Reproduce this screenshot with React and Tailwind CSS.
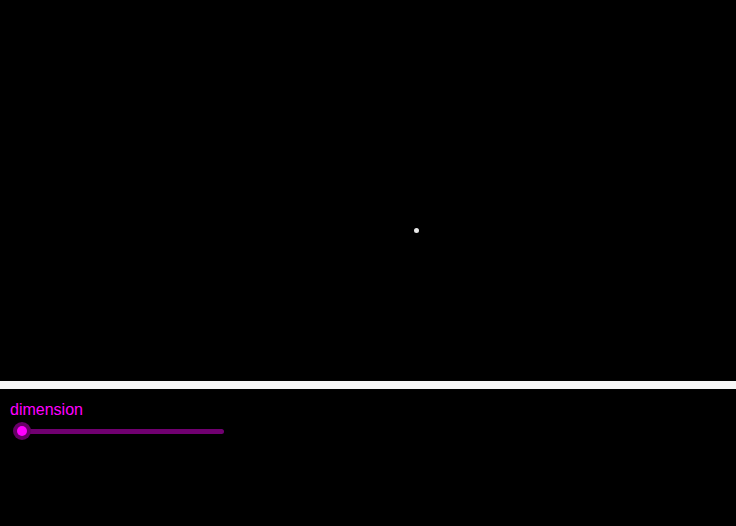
import React from "react";

const App = () => {
  return (
    <div
      className="w-[736px] h-[526px] bg-black flex flex-col overflow-hidden"
      style={{ fontFamily: '"Liberation Sans", Arial, sans-serif' }}
    >
      <div className="h-[381px] relative shrink-0">
        <div className="absolute left-[414px] top-[228px] w-[5px] h-[5px] rounded-full bg-[#e8e8e8]" />
      </div>
      <div className="h-[8px] bg-[#f7f7f7] shrink-0" />
      <div className="flex flex-col px-[10px] pt-[12px]">
        <span className="text-[16px] leading-[18px] text-[#ff00ff]">dimension</span>
        <div className="relative w-[214px] h-[18px] mt-[3px]">
          <div className="absolute left-[5px] right-0 top-[7px] h-[5px] rounded-full bg-[#700070]" />
          <div className="absolute left-[3px] top-0 w-[18px] h-[18px] rounded-full bg-[#660066] flex items-center justify-center">
            <div className="w-[10px] h-[10px] rounded-full bg-[#ff00ff]" />
          </div>
        </div>
      </div>
    </div>
  );
};

export default App;
